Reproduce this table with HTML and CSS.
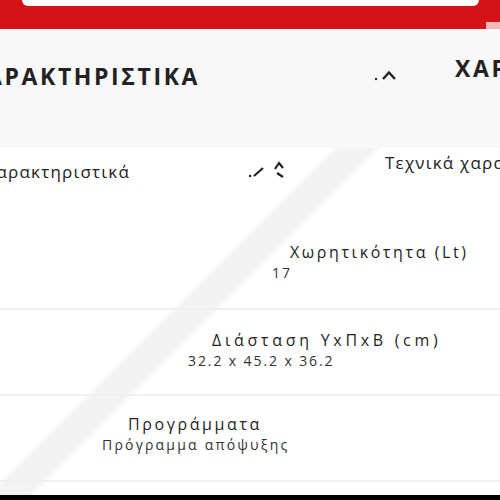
FILE: index.html
```html
<!DOCTYPE html>
<html lang="el">
<head>
<meta charset="utf-8">
<title>Χαρακτηριστικά</title>
<link rel="stylesheet" href="styles.css">
</head>
<body>
<div class="page">
  <header class="topbar">
    <div class="search"></div>
    <span class="notch"></span>
  </header>

  <section class="specs-head">
    <h2 class="title title-main">ΧΑΡΑΚΤΗΡΙΣΤΙΚΑ</h2>
    <svg class="chev chev-head" width="26" height="14" viewBox="0 0 26 14">
      <circle cx="2" cy="10" r="1.2" fill="#222"/>
      <polyline points="9,10 15,3.5 21,10" fill="none" stroke="#222" stroke-width="2.4"/>
    </svg>
    <h2 class="title title-ghost">ΧΑΡΑΚΤΗΡΙΣΤΙΚΑ</h2>
  </section>

  <section class="card">
    <div class="card-head">
      <span class="tab tab-main">Χαρακτηριστικά</span>
      <svg class="chev chev-card" width="38" height="20" viewBox="0 0 38 20">
        <circle cx="2" cy="17" r="1.2" fill="#222"/>
        <line x1="6" y1="17" x2="15" y2="9" stroke="#222" stroke-width="2.2"/>
        <path d="M27 10 L31 4 L35 9 M29 14 L35 18" fill="none" stroke="#222" stroke-width="2.2"/>
      </svg>
      <span class="tab tab-ghost">Τεχνικά χαρακτηριστικά</span>
    </div>
    <ul class="rows">
      <li class="row row-1">
        <div class="label">Χωρητικότητα (Lt)</div>
        <div class="value">17</div>
      </li>
      <li class="row row-2">
        <div class="label">Διάσταση ΥxΠxΒ (cm)</div>
        <div class="value">32.2 x 45.2 x 36.2</div>
      </li>
      <li class="row row-3">
        <div class="label">Προγράμματα</div>
        <div class="value">Πρόγραμμα απόψυξης</div>
      </li>
    </ul>
  </section>

  <div class="bottom-strip"></div>
</div>
</body>
</html>
```

FILE: styles.css
```css
* { box-sizing: border-box; }

html, body {
  margin: 0;
  padding: 0;
  background: #ffffff;
}

body {
  font-family: "Open Sans", "Noto Sans", "DejaVu Sans", sans-serif;
  color: #1f1f1f;
}

.page {
  width: 500px;
  height: 500px;
  overflow: hidden;
  display: flex;
  flex-direction: column;
}

/* top red bar */
.topbar {
  height: 29px;
  background: #d31317;
  display: flex;
  flex-shrink: 0;
}

.search {
  align-self: flex-start;
  width: 457px;
  height: 6px;
  margin-left: 22px;
  background: #ffffff;
  border-radius: 0 0 7px 7px;
}

.notch {
  align-self: flex-end;
  margin-left: auto;
  width: 14px;
  height: 7px;
  background: #f8b8b8;
}

/* section heading */
.specs-head {
  height: 119px;
  background: #f8f8f8;
  display: flex;
  align-items: flex-start;
  flex-shrink: 0;
  white-space: nowrap;
}

.title {
  margin: 0;
  font-size: 23px;
  font-weight: 700;
  line-height: 30px;
  letter-spacing: 2.6px;
  color: #222;
  flex-shrink: 0;
  display: flex;
  justify-content: flex-end;
}

.title-main {
  width: 218px;
  margin-left: -18px;
  margin-top: 32px;
}

.chev-head {
  flex-shrink: 0;
  margin-left: 174px;
  margin-top: 40px;
}

.title-ghost {
  width: 260px;
  justify-content: flex-start;
  margin-left: 55px;
  margin-top: 24px;
}

/* card */
.card {
  flex: 1;
  background:
    linear-gradient(135deg, #ffffff 234px, #f3f3f3 241px, #f3f3f3 264px, #ffffff 271px);
}

.card-head {
  height: 76px;
  display: flex;
  align-items: flex-start;
  white-space: nowrap;
}

.tab {
  font-size: 17px;
  line-height: 24px;
  letter-spacing: 1.2px;
  color: #222;
  flex-shrink: 0;
  display: flex;
}

.tab-main {
  width: 148px;
  margin-left: -18px;
  margin-top: 12px;
  justify-content: flex-end;
}

.chev-card {
  flex-shrink: 0;
  margin-left: 118px;
  margin-top: 11px;
}

.tab-ghost {
  margin-left: 99px;
  margin-top: 3px;
}

.rows {
  list-style: none;
  margin: 0;
  padding: 0;
}

.row {
  height: 86px;
  border-bottom: 2px solid #f0f0f0;
  padding-top: 17px;
  white-space: nowrap;
}

.label {
  font-size: 16px;
  line-height: 22px;
  letter-spacing: 2.6px;
  color: #1f1f1f;
}

.value {
  font-size: 14px;
  line-height: 20px;
  letter-spacing: 1.9px;
  color: #333;
}

.row-1 { padding-left: 272px; }
.row-1 .label { margin-left: 18px; }

.row-2 { padding-left: 188px; padding-top: 19px; }
.row-2 .label { margin-left: 24px; letter-spacing: 3.7px; }

.row-3 { padding-left: 102px; }
.row-3 .label { margin-left: 26px; }
.row-3 .value { letter-spacing: 2.2px; }

.bottom-strip {
  height: 5px;
  background: #000000;
  flex-shrink: 0;
}
```
